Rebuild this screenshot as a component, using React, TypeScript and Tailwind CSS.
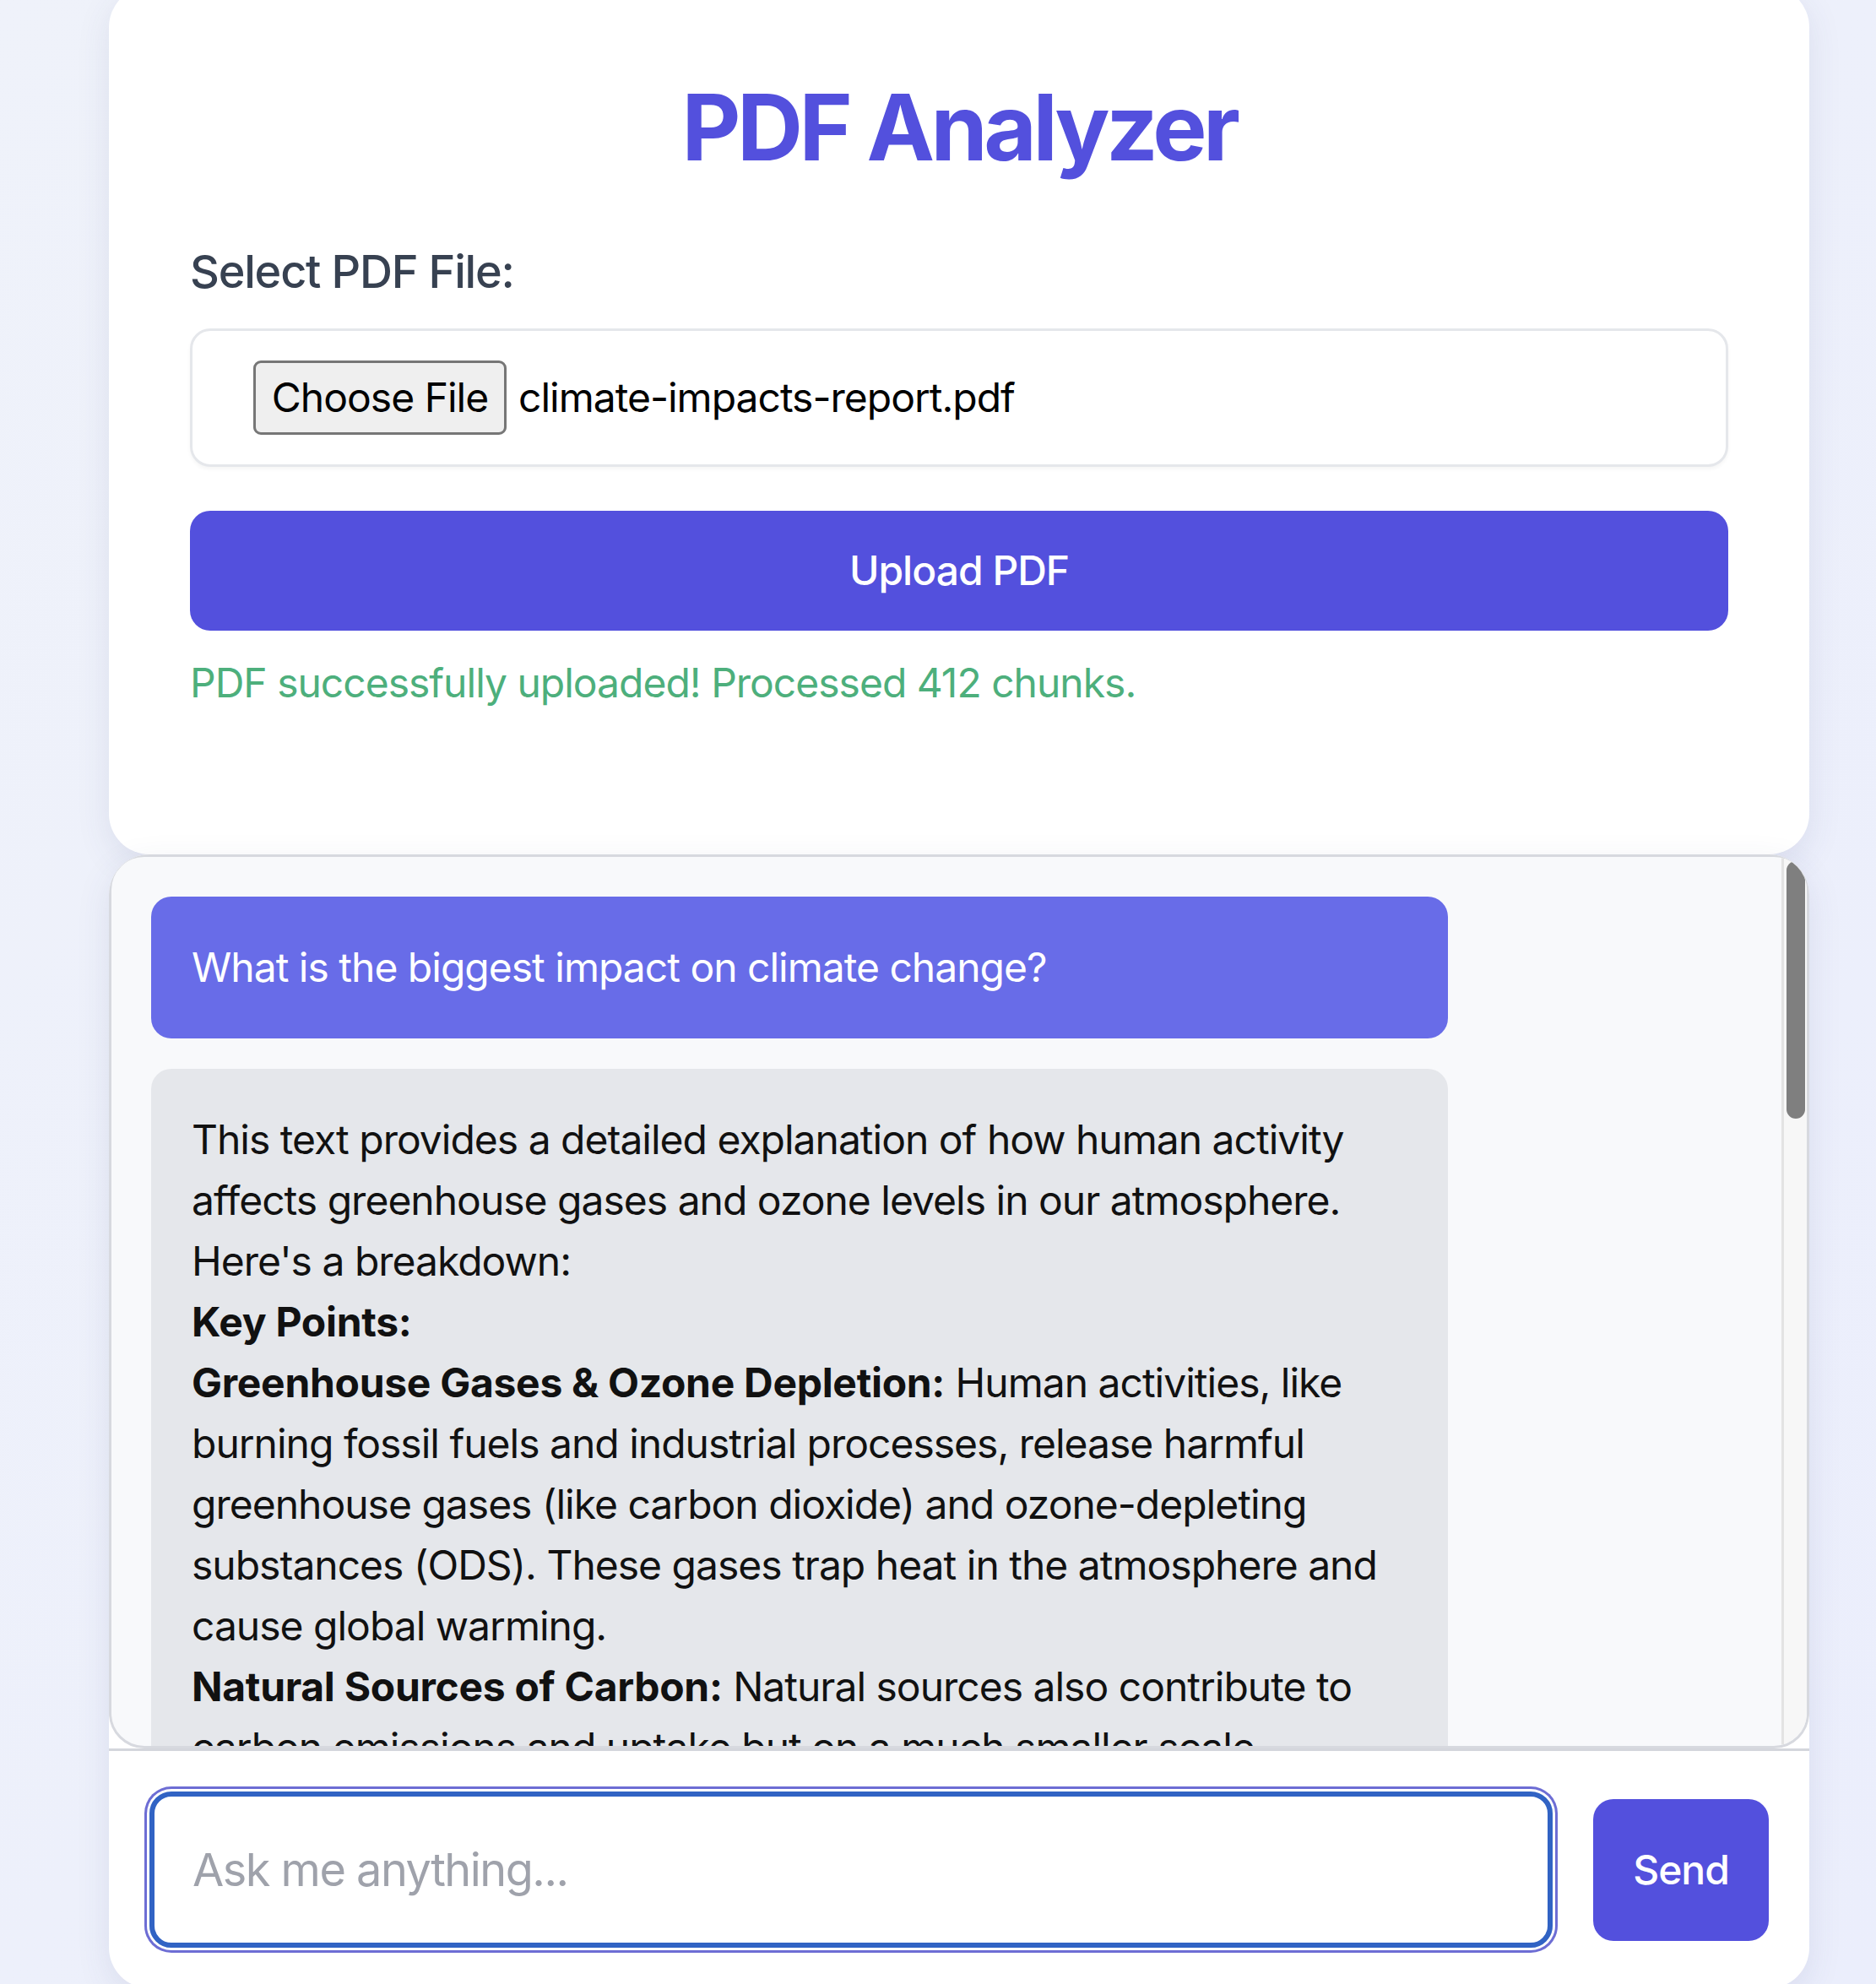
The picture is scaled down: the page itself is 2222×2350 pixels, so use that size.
const answerLines = [
  [null, 'This text provides a detailed explanation of how human activity'],
  [null, 'affects greenhouse gases and ozone levels in our atmosphere.'],
  [null, "Here's a breakdown:"],
  ['Key Points:', ''],
  ['Greenhouse Gases & Ozone Depletion:', ' Human activities, like'],
  [null, 'burning fossil fuels and industrial processes, release harmful'],
  [null, 'greenhouse gases (like carbon dioxide) and ozone-depleting'],
  [null, 'substances (ODS). These gases trap heat in the atmosphere and'],
  [null, 'cause global warming.'],
  ['Natural Sources of Carbon:', ' Natural sources also contribute to'],
  [null, 'carbon emissions and uptake but on a much smaller scale.'],
];

const Scrollbar = () => (
  <div className="w-[30px] shrink-0 border-l-[3px] border-[#e3e3e3] bg-[#f7f7f7] pt-[5px] pl-[3px] pr-[3px]">
    <div className="h-[305px] w-[22px] rounded-full bg-[#7f7f7f]" />
  </div>
);

const App = () => {
  return (
    <div className="min-h-screen overflow-hidden bg-gradient-to-br from-[#eff2fa] to-[#ebeefc] font-[Inter,'Noto_Sans',sans-serif] tracking-[-1px]">
      <div className="ml-[129px] mt-[-16px] w-[2014px]">
        {/* upload card */}
        <div className="rounded-[48px] bg-white px-[96px] pt-[107px] pb-[167px] shadow-[0_12px_40px_rgba(60,70,120,0.10)]">
          <h1 className="mb-[69px] text-center text-[108px] leading-[120px] font-bold tracking-[-4.5px] text-[#5350dd]">PDF Analyzer</h1>

          <label className="mb-[25px] block text-[54px] leading-[84px] font-medium tracking-[-1.2px] text-[#374151]">Select PDF File:</label>

          <div className="flex h-[164px] items-center rounded-[24px] border-[3px] border-[#e5e7eb] bg-white pl-[72px] shadow-[0_3px_4px_rgba(0,0,0,0.04)]">
            <div className="flex h-[88px] w-[300px] items-center justify-center rounded-[9px] border-[3px] border-[#767676] bg-[#efefef] text-[48px] text-black">
              Choose File
            </div>
            <span className="ml-[14px] text-[48px] text-black">climate-impacts-report.pdf</span>
          </div>

          <button className="mt-[52px] h-[142px] w-full rounded-[24px] bg-[#5350dd] text-[48px] font-medium text-white">
            Upload PDF
          </button>

          <p className="mt-[26px] text-[48px] leading-[72px] text-[#4daf7c]">
            PDF successfully uploaded! Processed 412 chunks.
          </p>
        </div>

        {/* chat card */}
        <div className="overflow-hidden rounded-[48px] bg-white shadow-[0_12px_40px_rgba(60,70,120,0.10)]">
          <div className="flex h-[1059px] overflow-hidden rounded-[42px] border-[3px] border-[#d7d9df] bg-[#f8f9fb]">
            <div className="flex flex-1 flex-col gap-[36px] overflow-hidden p-[47px]">
              <div className="w-[1536px] shrink-0 rounded-[24px] bg-[#686ce8] p-[48px] text-[48px] leading-[72px] text-white">
                What is the biggest impact on climate change?
              </div>
              <div className="w-[1536px] shrink-0 rounded-[24px] bg-[#e5e7eb] p-[48px] text-[48px] leading-[72px] whitespace-nowrap text-[#111111]">
                {answerLines.map(([bold, rest], i) => (
                  <div key={i}>
                    {bold && <strong className="font-bold tracking-[-0.3px]">{bold}</strong>}
                    {rest}
                  </div>
                ))}
              </div>
            </div>
            <Scrollbar />
          </div>

          <div className="flex items-center gap-[48px] border-t-[3px] border-[#d4d6dc] p-[48px]">
            <input
              className="h-[185px] flex-1 rounded-[26px] border-[6px] border-[#3163c4] bg-white pl-[45px] text-[54px] tracking-[-1.5px] text-black ring-[3px] ring-[#6d6dd4] ring-offset-[3px] ring-offset-white outline-none placeholder:text-[#9fa2ab]"
              placeholder="Ask me anything..."
            />
            <button className="h-[168px] w-[208px] shrink-0 rounded-[24px] bg-[#5350dd] text-[48px] font-medium text-white">
              Send
            </button>
          </div>
        </div>
      </div>
    </div>
  );
};

export default App;
